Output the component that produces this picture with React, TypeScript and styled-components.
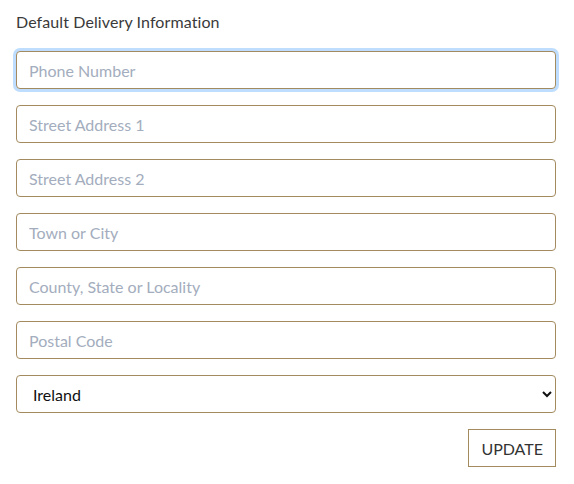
import styled, { createGlobalStyle } from 'styled-components';

const GOLD = '#a38b5f';

const GlobalStyle = createGlobalStyle`
  html, body {
    margin: 0;
    padding: 0;
    background: #fff;
  }
  body {
    font-family: Lato, 'Open Sans', 'Liberation Sans', sans-serif;
    color: #333;
  }
`;

const Form = styled.form`
  display: flex;
  flex-direction: column;
  gap: 16px;
  padding: 12px 18px 16px 16px;
`;

const Heading = styled.p`
  margin: 0 0 3px;
  font-size: 16px;
  line-height: 20px;
  color: #3a3a3a;
  letter-spacing: 0.1px;
`;

const Field = styled.input<{ $focused?: boolean }>`
  box-sizing: border-box;
  width: 100%;
  height: 38px;
  padding: 6px 12px;
  font-family: inherit;
  font-size: 16px;
  color: #222;
  background: #fff;
  border: 1px solid ${GOLD};
  border-radius: 4px;
  outline: none;
  box-shadow: ${(p) => (p.$focused ? '0 0 0 3px rgba(0, 123, 255, 0.25)' : 'none')};

  &::placeholder {
    color: #a3adbd;
  }
`;

const CountrySelect = styled.select`
  box-sizing: border-box;
  width: 100%;
  height: 38px;
  padding: 6px 12px;
  font-family: inherit;
  font-size: 16px;
  color: #111;
  background: #fff;
  border: 1px solid ${GOLD};
  border-radius: 4px;
  outline: none;
`;

const Actions = styled.div`
  display: flex;
  justify-content: flex-end;
`;

const UpdateButton = styled.button`
  box-sizing: border-box;
  height: 38px;
  padding: 0 12px;
  font-family: inherit;
  font-size: 16px;
  color: #333;
  background: #fff;
  border: 1px solid ${GOLD};
  border-radius: 0;
  text-transform: uppercase;
  cursor: pointer;
`;

const FIELDS = [
  'Phone Number',
  'Street Address 1',
  'Street Address 2',
  'Town or City',
  'County, State or Locality',
  'Postal Code',
];

const App = () => {
  return (
    <>
      <GlobalStyle />
      <Form onSubmit={(e) => e.preventDefault()}>
        <Heading>Default Delivery Information</Heading>
        {FIELDS.map((name, i) => (
          <Field key={name} type="text" placeholder={name} $focused={i === 0} />
        ))}
        <CountrySelect defaultValue="IE">
          <option value="IE">Ireland</option>
          <option value="GB">United Kingdom</option>
          <option value="US">United States</option>
        </CountrySelect>
        <Actions>
          <UpdateButton type="submit">Update</UpdateButton>
        </Actions>
      </Form>
    </>
  );
};

export default App;
